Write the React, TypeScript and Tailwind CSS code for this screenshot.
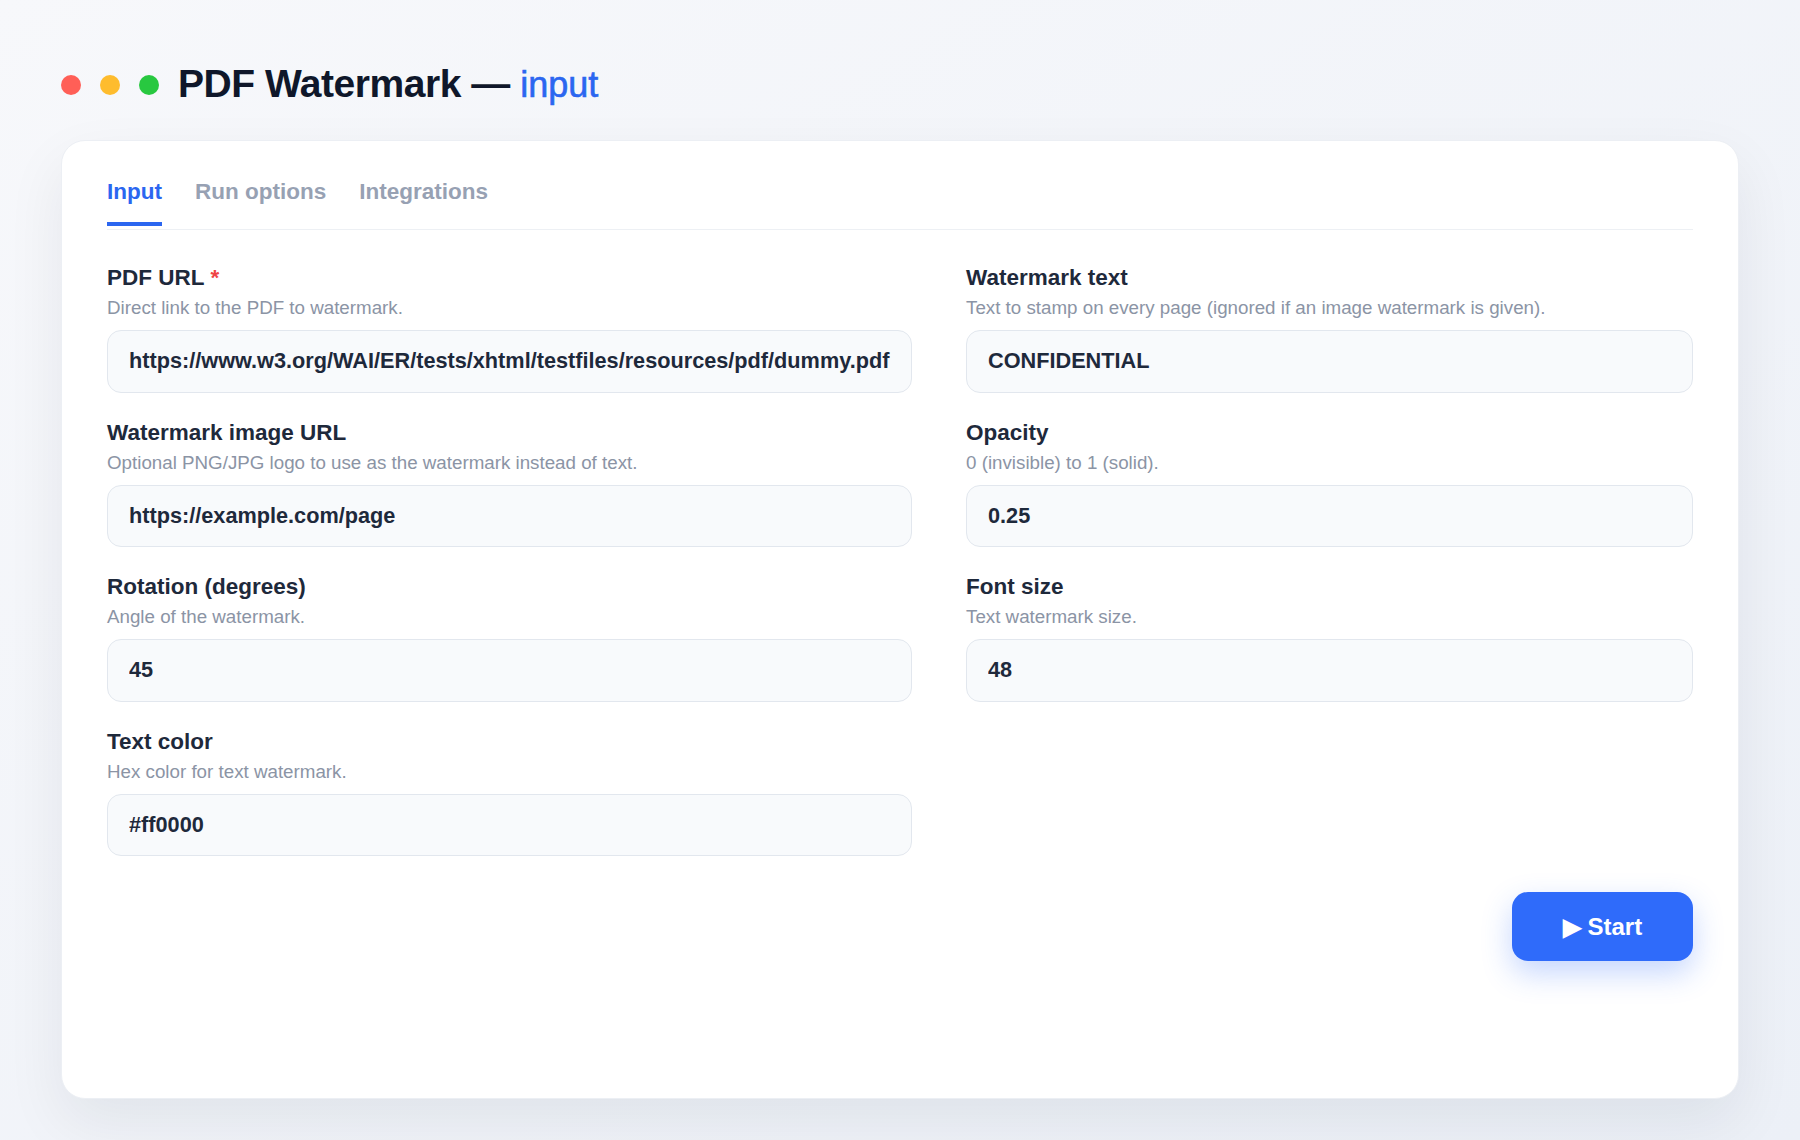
import React from "react";

interface Field {
  label: string;
  hint: string;
  value: string;
  required?: boolean;
}

const leftFields: Field[] = [
  {
    label: "PDF URL",
    hint: "Direct link to the PDF to watermark.",
    value: "https://www.w3.org/WAI/ER/tests/xhtml/testfiles/resources/pdf/dummy.pdf",
    required: true,
  },
  {
    label: "Watermark image URL",
    hint: "Optional PNG/JPG logo to use as the watermark instead of text.",
    value: "https://example.com/page",
  },
  { label: "Rotation (degrees)", hint: "Angle of the watermark.", value: "45" },
  { label: "Text color", hint: "Hex color for text watermark.", value: "#ff0000" },
];

const rightFields: Field[] = [
  {
    label: "Watermark text",
    hint: "Text to stamp on every page (ignored if an image watermark is given).",
    value: "CONFIDENTIAL",
  },
  { label: "Opacity", hint: "0 (invisible) to 1 (solid).", value: "0.25" },
  { label: "Font size", hint: "Text watermark size.", value: "48" },
];

const tabs = ["Input", "Run options", "Integrations"];

function FormField({ field }: { field: Field }) {
  return (
    <div className="flex flex-col">
      <label className="text-[22.5px] leading-[28px] font-bold text-[#1e293b]">
        {field.label}
        {field.required && <span className="ml-[6px] text-[#ef4444]">*</span>}
      </label>
      <p className="mt-[3px] text-[18.75px] leading-[25px] text-[#8b94a5]">{field.hint}</p>
      <input
        readOnly
        value={field.value}
        className="mt-[10px] h-[62.5px] w-full rounded-[14px] border border-[#e2e7ee] bg-[#f8fafc] pl-[21px] pr-[10px] text-[21.7px] font-bold text-[#1e293b] outline-none"
      />
    </div>
  );
}

export default function App() {
  return (
    <div
      className="min-h-[1140px] w-full bg-gradient-to-br from-[#f7f8fb] to-[#ecf0f7] px-[61px] pt-[60px] pb-[40px]"
      style={{ fontFamily: '"Liberation Sans", Arial, sans-serif' }}
    >
      {/* Header */}
      <div className="flex items-center">
        <div className="flex items-center gap-[19px]">
          <span className="h-[20px] w-[20px] rounded-full bg-[#ff5f57]" />
          <span className="h-[20px] w-[20px] rounded-full bg-[#febc2e]" />
          <span className="h-[20px] w-[20px] rounded-full bg-[#28c840]" />
        </div>
        <h1 className="ml-[19px] text-[39px] leading-[48px] font-bold tracking-[-0.012em] text-[#0f172a]">
          PDF Watermark —{" "}
          <span className="text-[36px] font-normal tracking-normal text-[#2b66f0] [-webkit-text-stroke:0.6px_#2b66f0]">
            input
          </span>
        </h1>
      </div>

      {/* Card */}
      <div className="mt-[31px] flex h-[959px] flex-col rounded-3xl border border-[#eceff4] bg-white px-[45px] pt-[37px] shadow-[0_24px_60px_rgba(15,23,42,0.07)]">
        {/* Tabs */}
        <div className="flex gap-[33px] border-b border-[#edf0f4] pb-[3px]">
          {tabs.map((tab, i) => (
            <div
              key={tab}
              className={`border-b-4 pb-[16px] text-[22.5px] leading-[28px] font-bold ${
                i === 0 ? "border-[#2b66f0] text-[#2b66f0]" : "border-transparent text-[#97a1b3]"
              }`}
            >
              {tab}
            </div>
          ))}
        </div>

        {/* Form grid */}
        <div className="mt-[34px] grid grid-cols-[805px_1fr] gap-x-[54px]">
          <div className="flex flex-col gap-[26px]">
            {leftFields.map((f) => (
              <FormField key={f.label} field={f} />
            ))}
          </div>
          <div className="flex flex-col gap-[26px]">
            {rightFields.map((f) => (
              <FormField key={f.label} field={f} />
            ))}
          </div>
        </div>

        {/* Actions */}
        <div className="mt-[36px] flex justify-end">
          <button className="h-[69px] w-[181px] rounded-[16px] bg-[#2f6bfa] text-[24px] font-bold text-white shadow-[0_12px_30px_rgba(47,107,250,0.28)]">
            ▶ Start
          </button>
        </div>
      </div>
    </div>
  );
}
